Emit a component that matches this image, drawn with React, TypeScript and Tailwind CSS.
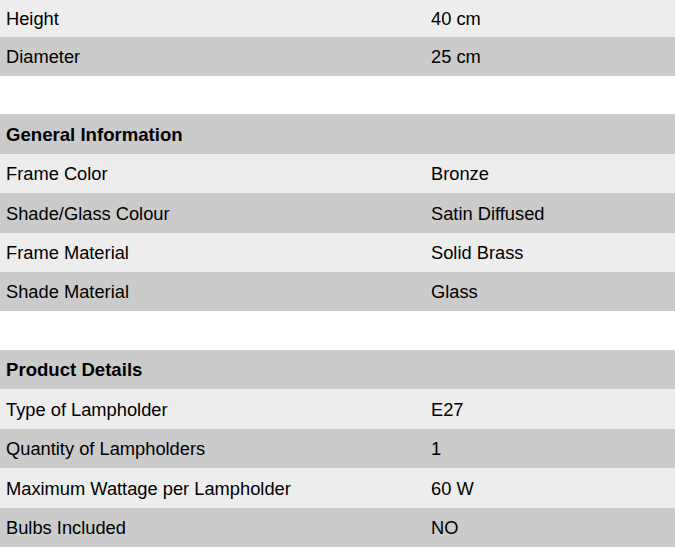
type Row = { label: string; value?: string; kind?: 'light' | 'dark' | 'head' | 'gap'; h: number };

const rows: Row[] = [
  { label: 'Height', value: '40 cm', kind: 'light', h: 37 },
  { label: 'Diameter', value: '25 cm', kind: 'dark', h: 39 },
  { label: '', kind: 'gap', h: 38 },
  { label: 'General Information', kind: 'head', h: 40 },
  { label: 'Frame Color', value: 'Bronze', kind: 'light', h: 39 },
  { label: 'Shade/Glass Colour', value: 'Satin Diffused', kind: 'dark', h: 40 },
  { label: 'Frame Material', value: 'Solid Brass', kind: 'light', h: 39 },
  { label: 'Shade Material', value: 'Glass', kind: 'dark', h: 39 },
  { label: '', kind: 'gap', h: 39 },
  { label: 'Product Details', kind: 'head', h: 39 },
  { label: 'Type of Lampholder', value: 'E27', kind: 'light', h: 40 },
  { label: 'Quantity of Lampholders', value: '1', kind: 'dark', h: 39 },
  { label: 'Maximum Wattage per Lampholder', value: '60 W', kind: 'light', h: 40 },
  { label: 'Bulbs Included', value: 'NO', kind: 'dark', h: 39 },
];

export default function App() {
  return (
    <div
      className="w-[675px] h-[549px] bg-white overflow-hidden text-[18.3px] text-black"
      style={{ fontFamily: '"Liberation Sans", Arial, sans-serif' }}
    >
      {rows.map((r, i) => {
        const bg =
          r.kind === 'light'
            ? 'bg-[#ededed]'
            : r.kind === 'dark' || r.kind === 'head'
            ? 'bg-[#cbcbcb]'
            : 'bg-white';
        return (
          <div key={i} className={`flex items-center pt-[1px] ${bg}`} style={{ height: r.h }}>
            {r.kind === 'head' ? (
              <div className="pl-[6px] font-bold text-[18.6px]">{r.label}</div>
            ) : r.kind === 'gap' ? null : (
              <>
                <div className="w-[431px] pl-[6px]">{r.label}</div>
                <div>{r.value}</div>
              </>
            )}
          </div>
        );
      })}
    </div>
  );
}
